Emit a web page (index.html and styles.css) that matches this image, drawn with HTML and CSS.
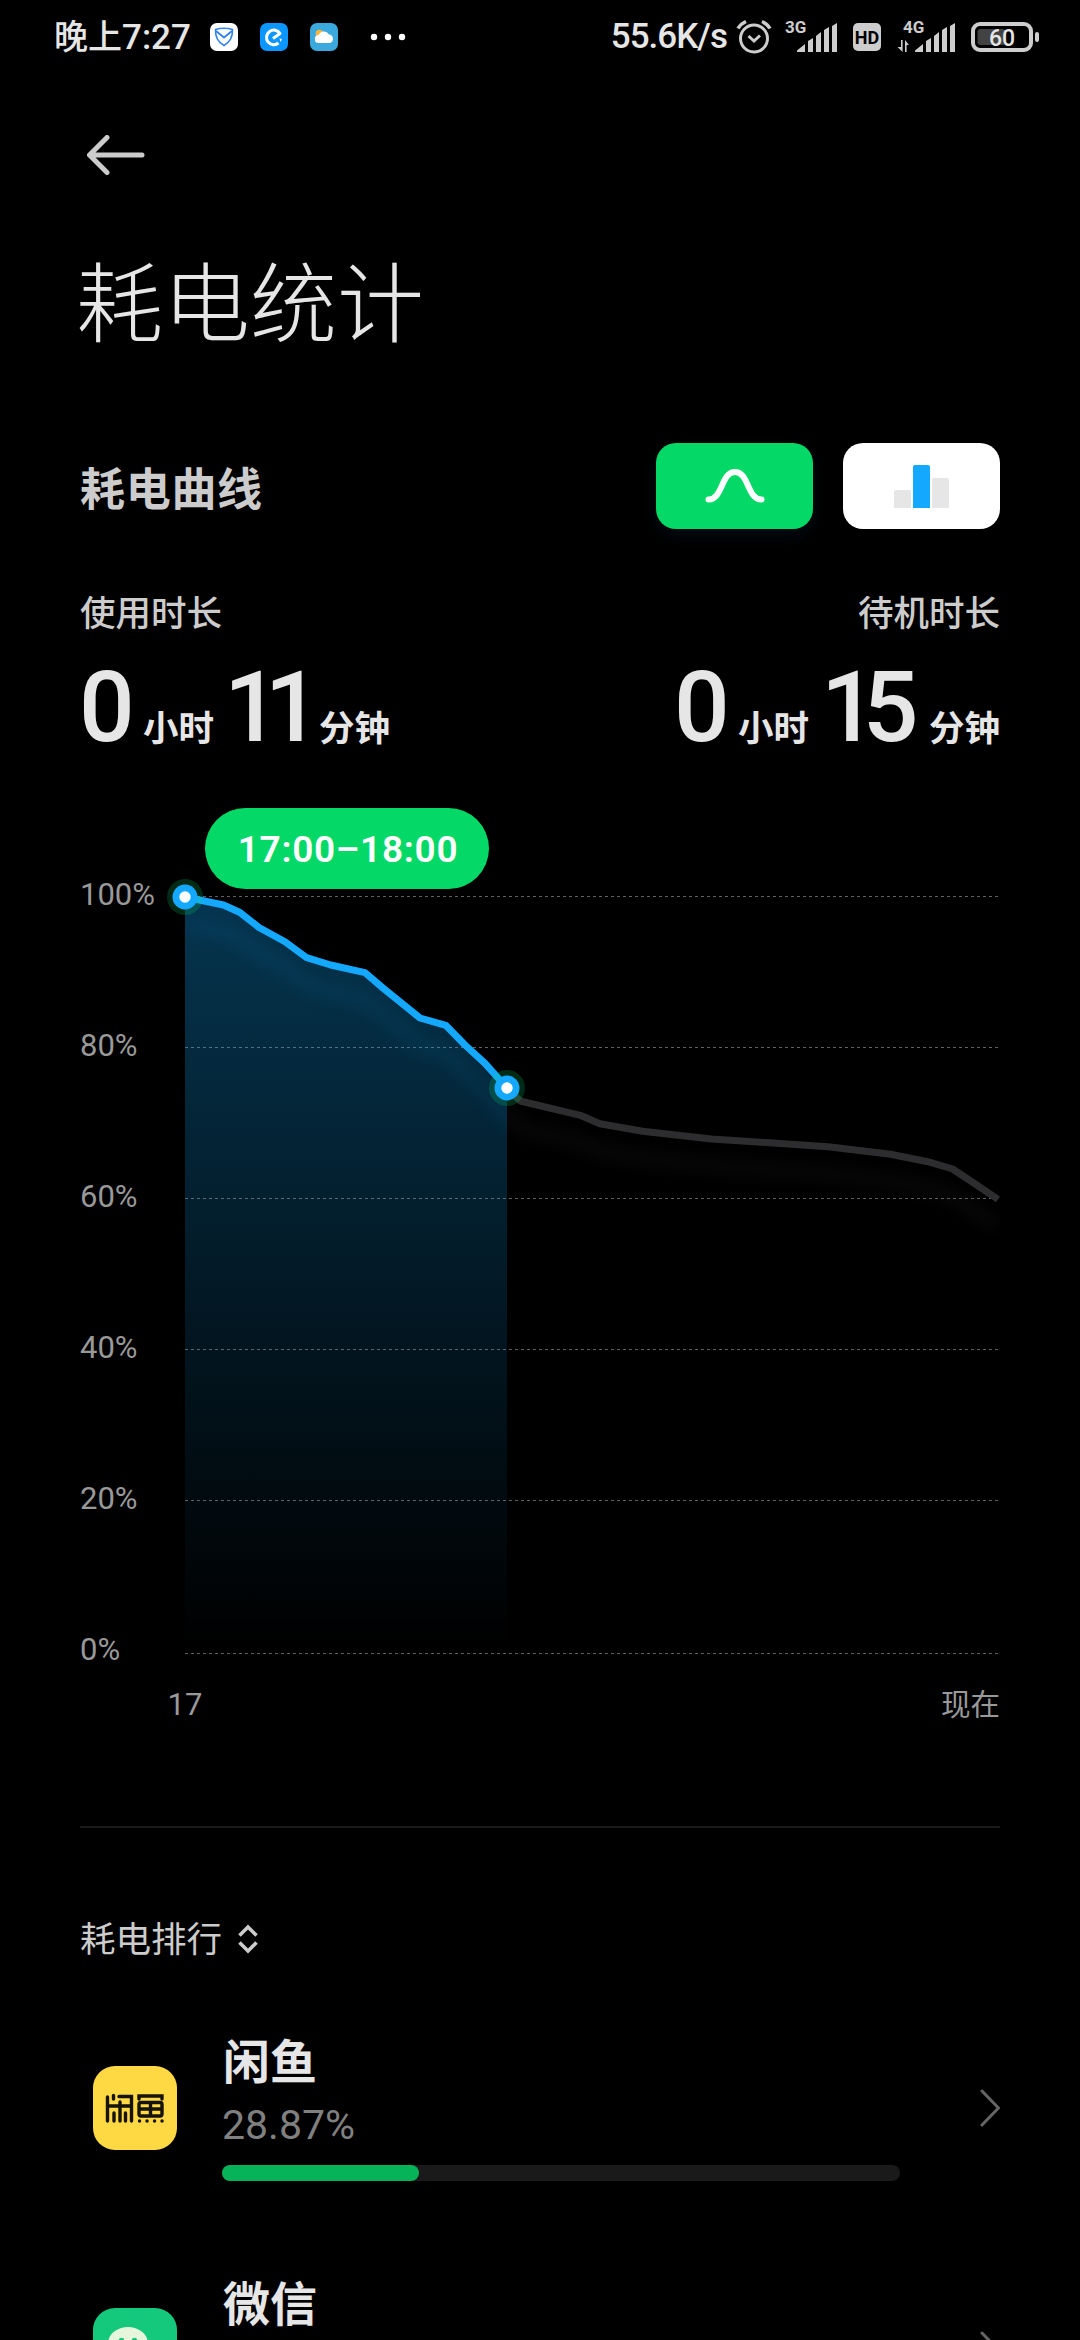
FILE: index.html
```html
<!DOCTYPE html>
<html lang="zh-CN">
<head>
    <meta charset="UTF-8">
    <meta name="viewport" content="width=device-width, initial-scale=1.0">
    <title>耗电统计</title>
    <link rel="stylesheet" href="styles.css">
</head>
<body>
    <!-- 状态栏 -->
    <header class="status-bar">
        <div class="status-left">
            <span class="time"><span class="time-cn">晚上</span>7:27</span>
            <svg class="notify" viewBox="0 0 28 28">
                <rect width="28" height="28" rx="7" fill="#fff"/>
                <path d="M5.5 6.5Q14 4 22.500 6.500Q23 17.500 14 22.500Q5 17.500 5.500 6.500Z" fill="none" stroke="#3384e8" stroke-width="1.600"/>
                <path d="M6 8l8 6.500L22 8" fill="none" stroke="#3384e8" stroke-width="1.800"/>
            </svg>
            <svg class="notify" viewBox="0 0 28 28">
                <rect width="28" height="28" rx="7" fill="#0b97ff"/>
                <path d="M13 15.500l7-5A7.300 7.300 0 1 0 18.500 20" fill="none" stroke="#fff" stroke-width="3" stroke-linejoin="round"/>
                <path d="M19.500 15l2.500 1.500-1.500 2.500" fill="#fff"/>
            </svg>
            <svg class="notify" viewBox="0 0 28 28">
                <rect width="28" height="28" rx="7" fill="#3ba9de"/>
                <circle cx="9.500" cy="10.500" r="3.800" fill="#f4b63f"/>
                <path d="M9 20a4 4 0 0 1-.3-8A5.800 5.800 0 0 1 19 11.500a4.300 4.300 0 0 1 .5 8.500z" fill="#fff"/>
            </svg>
            <svg class="more" viewBox="0 0 36 8">
                <circle cx="4" cy="4" r="3.200"/>
                <circle cx="18" cy="4" r="3.200"/>
                <circle cx="32" cy="4" r="3.200"/>
            </svg>
        </div>
        <div class="status-right">
            <span class="speed">55.6K/s</span>
            <svg class="alarm" viewBox="0 0 36 36">
                <g fill="none" stroke="#cdcdcd" stroke-width="3">
                    <circle cx="18" cy="19.500" r="13.500"/>
                    <path d="M12.500 17l5.500 5 6-5.500"/>
                    <path d="M2 9.500Q4.500 5 10 2.500M26 2.500Q31.500 5 34 9.500" stroke-width="3.500"/>
                </g>
            </svg>
            <svg class="signal signal-a" viewBox="0 -6 54 46">
                <text class="net" x="0" y="13">3G</text>
                <path d="M12 32v-1.500l8-6.500V32zM23 32V21l5-3v14zM31 32V16l5-4v20zM39 32V10l5-3v25zM47 32V6l5-3v29z"/>
            </svg>
            <svg class="hd" viewBox="0 0 28 28">
                <rect width="28" height="28" rx="5"/>
                <text x="14" y="20.500" text-anchor="middle">HD</text>
            </svg>
            <svg class="signal signal-b" viewBox="-6 -6 60 46">
                <text class="net" x="0" y="13">4G</text>
                <path d="M-5.500 27h3.500v-7h1.600v12zM2 32V20l4 5H3.600v7z"/>
                <path d="M12 32v-1.500l8-6.500V32zM23 32V21l5-3v14zM31 32V16l5-4v20zM39 32V10l5-3v25zM47 32V6l5-3v29z"/>
            </svg>
            <svg class="battery" viewBox="0 0 68 30">
                <rect x="2" y="2" width="58" height="26" rx="7" fill="none" stroke="#cdcdcd" stroke-width="4"/>
                <rect x="6.500" y="7" width="28" height="16" rx="3" fill="#424242"/>
                <rect x="64" y="10" width="4" height="10" rx="2" fill="#cdcdcd"/>
                <text x="31" y="23.500" text-anchor="middle">60</text>
            </svg>
        </div>
    </header>

    <main class="page">
        <nav class="nav">
            <svg class="back" viewBox="0 0 58 40">
                <path d="M20 2.500L2.500 20 20 37.500M3 20h52"/>
            </svg>
        </nav>
        <h1>耗电统计</h1>

        <!-- 曲线标题与切换按钮 -->
        <section class="curve-head">
            <h2>耗电曲线</h2>
            <div class="tabs">
                <button class="tab active">
                    <svg viewBox="0 0 60 36">
                        <path d="M3.500 31.500C18 31.500 16 4 30 4S42 31.500 56.500 31.500"/>
                    </svg>
                </button>
                <button class="tab">
                    <svg viewBox="0 0 60 44">
                        <path d="M2 44V28q0-2 2-2h13q2 0 2 2v16z" fill="#e6e6e6"/>
                        <path d="M21 44V3q0-2 2-2h13q2 0 2 2v41z" fill="#14a9ff"/>
                        <path d="M40 44V16q0-2 2-2h13q2 0 2 2v28z" fill="#e6e6e6"/>
                    </svg>
                </button>
            </div>
        </section>

        <!-- 使用 / 待机时长 -->
        <section class="durations">
            <div class="duration">
                <p class="label">使用时长</p>
                <p class="value"><b class="hour">0</b><i>小时</i><b class="minute eleven">11</b><i>分钟</i></p>
            </div>
            <div class="duration">
                <p class="label">待机时长</p>
                <p class="value"><b class="hour">0</b><i>小时</i><b class="minute fifteen">15</b><i>分钟</i></p>
            </div>
        </section>

        <!-- 电量曲线 -->
        <svg class="chart" viewBox="80 780 920 960">
            <defs>
                <linearGradient id="fade" gradientUnits="userSpaceOnUse" x1="0" y1="896" x2="0" y2="1645">
                    <stop offset="0" stop-color="#11aaff" stop-opacity=".31"/>
                    <stop offset="1" stop-color="#11aaff" stop-opacity="0"/>
                </linearGradient>
                <filter id="soft" x="-10%" y="-20%" width="120%" height="150%">
                    <feGaussianBlur stdDeviation="8"/>
                </filter>
                <clipPath id="used"><rect x="185" y="870" width="322" height="770"/></clipPath>
                <clipPath id="rest"><rect x="507" y="1030" width="493" height="240"/></clipPath>
            </defs>
            <g class="grid">
                <path d="M185 896.500H998M185 1047.500H998M185 1198.500H998M185 1349.500H998M185 1500.500H998M185 1653.500H998"/>
            </g>
            <g class="axis">
                <text x="80" y="905">100%</text>
                <text x="80" y="1056">80%</text>
                <text x="80" y="1207">60%</text>
                <text x="80" y="1358">40%</text>
                <text x="80" y="1509">20%</text>
                <text x="80" y="1660">0%</text>
                <text x="185" y="1715" text-anchor="middle">17</text>
                <text class="now" x="1000" y="1715" text-anchor="end">现在</text>
            </g>
            <path fill="url(#fade)" d="M185 897L223.500 905 240 912.500 259 927.500 285 941.700 306.700 957.700 330.700 965 365 972.700 383.500 988.500 420 1018 445.700 1025.300 465 1045 485 1063.300 507 1088V1650H185z"/>
            <g clip-path="url(#used)">
                <path class="line glow-blue" filter="url(#soft)" transform="translate(0 27)" d="M185 897L223.500 905 240 912.500 259 927.500 285 941.700 306.700 957.700 330.700 965 365 972.700 383.500 988.500 420 1018 445.700 1025.300 465 1045 485 1063.300 507 1088 520 1101"/>
            </g>
            <g clip-path="url(#rest)">
                <path class="line glow-grey" filter="url(#soft)" transform="translate(0 27)" d="M485 1063L507 1088 520.200 1101 581.400 1115.700 599.800 1123.700 642.600 1131.300 711.500 1139 828 1146.700 890.600 1154.300 927.800 1161.700 952.600 1169 973.700 1183 998 1199.300"/>
            </g>
            <path class="line grey" d="M507 1088L520.200 1101 581.400 1115.700 599.800 1123.700 642.600 1131.300 711.500 1139 828 1146.700 890.600 1154.300 927.800 1161.700 952.600 1169 973.700 1183 998 1199.300"/>
            <path class="line blue" d="M185 897L223.500 905 240 912.500 259 927.500 285 941.700 306.700 957.700 330.700 965 365 972.700 383.500 988.500 420 1018 445.700 1025.300 465 1045 485 1063.300 507 1088"/>
            <g class="marker">
                <circle class="halo" cx="185" cy="897" r="18"/>
                <circle class="ring" cx="185" cy="897" r="12.500"/>
                <circle class="dot" cx="185" cy="897" r="5.700"/>
            </g>
            <g class="marker">
                <circle class="halo" cx="507" cy="1088" r="18"/>
                <circle class="ring" cx="507" cy="1088" r="12.500"/>
                <circle class="dot" cx="507" cy="1088" r="5.700"/>
            </g>
            <rect x="205" y="808" width="284" height="81" rx="40.500" fill="#04d968"/>
            <text class="period" x="348" y="861.500" text-anchor="middle">17:00–18:00</text>
        </svg>

        <!-- 耗电排行 -->
        <section class="ranking">
            <div class="sort">
                <span>耗电排行</span>
                <svg viewBox="0 0 20 30">
                    <path d="M1.500 11.500L10 3l8.500 8.500M1.500 18.500L10 27l8.500-8.500"/>
                </svg>
            </div>
            <div class="app">
                <svg class="app-icon" viewBox="0 0 84 84">
                    <rect width="84" height="84" rx="22" fill="#ffd944"/>
                    <g fill="none" stroke="#15130a" stroke-width="3.400" stroke-linecap="round">
                        <path d="M14.500 31v24M20.500 29.500v3.500M26 30.500h12.500V55M15 40h23M27 36v19M21 47v8M32.500 47v8"/>
                        <path d="M46 33v-3h23v3M46 38.500q0-2 2-2h19q2 0 2 2V48q0 2-2 2H48q-2 0-2-2zM46 43h23M57.500 37v13"/>
                        <path d="M46.500 55h.1M54 55h.1M61.500 55h.1M69 55h.1"/>
                    </g>
                </svg>
                <div class="app-info">
                    <h3>闲鱼</h3>
                    <p>28.87%</p>
                    <div class="bar"><div class="bar-fill" style="width: 29%"></div></div>
                </div>
                <svg class="arrow" viewBox="0 0 20 38"><path d="M2 2l16.500 17L2 36"/></svg>
            </div>
            <div class="app">
                <svg class="app-icon" viewBox="0 0 84 84">
                    <rect width="84" height="84" rx="22" fill="#14c87c"/>
                    <path d="M35 19c11 0 20 7.300 20 16.500S46 52 35 52q-4 0-7.500-1L20 54l2-6.500c-4-3-7-7-7-12C15 26.300 24 19 35 19z" fill="#e6f6dc"/>
                    <circle cx="28.500" cy="32.500" r="2.800" fill="#14c87c"/>
                    <circle cx="41.500" cy="32.500" r="2.800" fill="#14c87c"/>
                    <ellipse cx="54" cy="50" rx="16" ry="13.500" fill="#fff"/>
                </svg>
                <div class="app-info">
                    <h3>微信</h3>
                </div>
                <svg class="arrow" viewBox="0 0 20 38"><path d="M2 2l16.500 17L2 36"/></svg>
            </div>
        </section>
    </main>
</body>
</html>
```
FILE: styles.css
```css
* {
    margin: 0;
    padding: 0;
    box-sizing: border-box;
}

body {
    width: 1080px;
    height: 2340px;
    overflow: hidden;
    background: #000;
    color: #e6e6e6;
    font-family: Roboto, "Noto Sans CJK SC", sans-serif;
}

svg {
    display: block;
    flex: none;
}

/* 状态栏 */
.status-bar {
    display: flex;
    justify-content: space-between;
    height: 74px;
    padding: 0 41px 0 54px;
}

.status-left,
.status-right {
    display: flex;
    align-items: center;
}

.time {
    width: 156px;
    font-size: 35px;
    font-weight: 500;
    line-height: 74px;
    white-space: nowrap;
}

.time-cn {
    font-size: 34px;
}

.notify {
    width: 28px;
    height: 28px;
    margin-right: 22px;
}

.more {
    width: 36px;
    height: 8px;
    margin-left: 10px;
    fill: #fff;
}

.speed {
    font-size: 35px;
    font-weight: 500;
    line-height: 76px;
    letter-spacing: -1px;
    margin-right: 9px;
}

.alarm {
    width: 36px;
    height: 36px;
    margin-right: 13px;
}

.signal {
    height: 46px;
    fill: #cdcdcd;
}

.signal-a {
    width: 54px;
    margin-right: 14px;
}

.signal-b {
    width: 60px;
    margin-right: 14px;
}

.net {
    font-size: 17px;
    font-weight: 700;
}

.hd {
    width: 28px;
    height: 28px;
    margin-right: 16px;
    fill: #cdcdcd;
}

.hd text {
    font-size: 18px;
    font-weight: 700;
    fill: #000;
}

.battery {
    width: 68px;
    height: 30px;
}

.battery text {
    font-size: 23px;
    font-weight: 500;
    fill: #e6e6e6;
}

/* 页面主体 */
.page {
    height: 2266px;
    padding: 0 80px;
    overflow: hidden;
}

.nav {
    height: 162px;
    padding: 61px 0 0 7px;
}

.back {
    width: 58px;
    height: 40px;
    fill: none;
    stroke: #ccc;
    stroke-width: 5;
    stroke-linecap: round;
    stroke-linejoin: round;
}

h1 {
    height: 207px;
    padding-top: 5px;
    margin-left: -4px;
    font-size: 87px;
    font-weight: 200;
    line-height: 130px;
}

.curve-head {
    display: flex;
    justify-content: space-between;
    align-items: center;
    height: 86px;
}

h2 {
    font-size: 45px;
    font-weight: 700;
    letter-spacing: 0.7px;
    color: #ccc;
}

.tabs {
    display: flex;
    gap: 30px;
}

.tab {
    display: flex;
    justify-content: center;
    align-items: center;
    width: 157px;
    height: 86px;
    border: none;
    border-radius: 20px;
    background: #fff;
}

.tab svg {
    width: 60px;
    height: 44px;
}

.tab.active {
    background: #04d968;
    box-shadow: 0 6px 16px rgba(17, 100, 170, 0.12);
}

.tab.active svg {
    height: 36px;
    fill: none;
    stroke: #fff;
    stroke-width: 6;
    stroke-linecap: round;
}

/* 时长 */
.durations {
    display: flex;
    justify-content: space-between;
    height: 251px;
    padding-top: 58px;
}

.label {
    font-size: 35.5px;
    font-weight: 500;
    line-height: 54px;
    color: #ccc;
}

.duration:last-child .label {
    text-align: right;
}

.value {
    display: flex;
    align-items: baseline;
    height: 120px;
    padding-top: 7px;
    line-height: 120px;
}

.value b {
    font-size: 98px;
    font-weight: 500;
}

.value i {
    font-size: 35.5px;
    font-weight: 600;
    font-style: normal;
}

.hour {
    width: 63px;
    margin-left: -1px;
    margin-right: 1px;
}

.minute {
    width: 105px;
    padding-left: 10px;
    letter-spacing: -15px;
}

.fifteen {
    width: 120px;
    padding-left: 12px;
    letter-spacing: -14px;
}

/* 电量曲线 */
.chart {
    width: 920px;
    height: 960px;
}

.grid {
    stroke: #606060;
    stroke-dasharray: 3 3;
}

.axis {
    font-size: 31px;
    fill: #999;
}

.now {
    font-size: 29.5px;
}

.line {
    fill: none;
    stroke-width: 7;
    stroke-linejoin: round;
}

.blue {
    stroke: #14a9ff;
}

.grey {
    stroke: #2d2d2f;
}

.glow-blue {
    stroke: #14a9ff;
    stroke-width: 14;
    opacity: 0.08;
}

.glow-grey {
    stroke: #555;
    stroke-width: 14;
    opacity: 0.1;
}

.halo {
    fill: #04d968;
    opacity: 0.2;
}

.ring {
    fill: #14a9ff;
}

.dot {
    fill: #fff;
}

.period {
    font-size: 37px;
    font-weight: 600;
    letter-spacing: 0.7px;
    fill: #fff;
}

/* 排行 */
.ranking {
    margin-top: 86px;
    border-top: 2px solid #1a1a1a;
}

.sort {
    display: flex;
    align-items: center;
    gap: 16px;
    height: 221px;
    font-size: 35.5px;
    color: #ccc;
}

.sort span {
    margin-top: -4px;
}

.sort svg {
    width: 20px;
    height: 30px;
    fill: none;
    stroke: #ccc;
    stroke-width: 3.6;
}

.app {
    display: flex;
    align-items: flex-start;
    height: 242px;
}

.app-icon {
    width: 84px;
    height: 84px;
    margin: 17px 45px 0 13px;
}

.app-info {
    width: 678px;
}

h3 {
    height: 50px;
    margin-left: 1px;
    font-size: 47px;
    font-weight: 700;
    line-height: 28px;
}

.app-info p {
    height: 66px;
    font-size: 41px;
    line-height: 52px;
    color: #808080;
}

.bar {
    height: 16px;
    border-radius: 8px;
    background: #1a1a1a;
}

.bar-fill {
    height: 100%;
    border-radius: 8px;
    background: #06b358;
}

.arrow {
    width: 20px;
    height: 38px;
    margin: 40px 0 0 80px;
    fill: none;
    stroke: #666;
    stroke-width: 3;
    stroke-linecap: round;
}
```
